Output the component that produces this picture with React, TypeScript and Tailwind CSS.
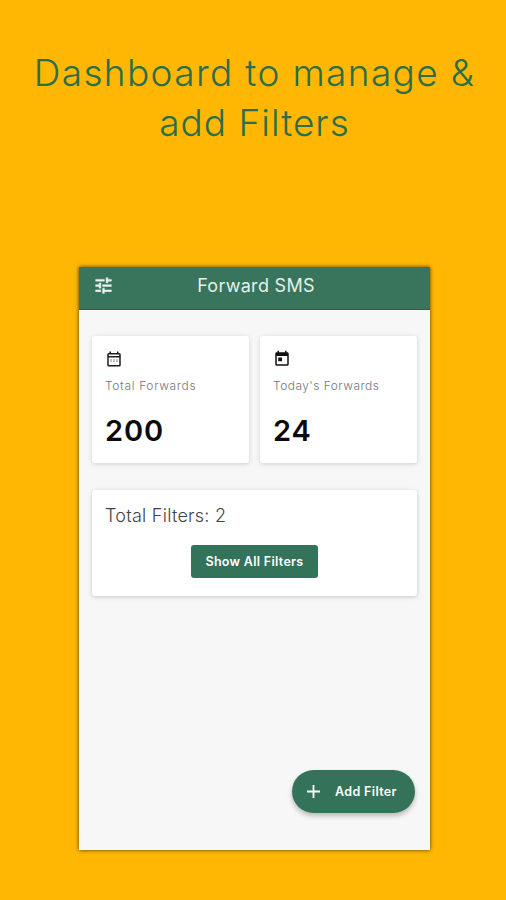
import type { ReactNode } from 'react'
import { MdToday } from 'react-icons/md'

function TuneIcon() {
  return (
    <svg width="21" height="21" viewBox="0 0 24 24" fill="currentColor" stroke="currentColor" strokeWidth="0.5" className="ml-[14px] text-[#eef5f1]">
      <path d="M3 17v2h6v-2H3zM3 5v2h10V5H3zm10 16v-2h8v-2h-8v-2h-2v6h2zM7 9v2H3v2h4v2h2V9H7zm14 4v-2H11v2h10zm-6-4h2V7h4V5h-4V3h-2v6z" />
    </svg>
  )
}

function CalendarIcon() {
  return (
    <svg width="18" height="18" viewBox="0 0 24 24" fill="#1c1c1c">
      <path d="M19 4h-1V2h-2v2H8V2H6v2H5a2 2 0 0 0-2 2v14a2 2 0 0 0 2 2h14a2 2 0 0 0 2-2V6a2 2 0 0 0-2-2Zm0 16H5V10h14v10Zm0-12H5V6h14v2Z" />
      <path d="M7 12h2v4H7zM11 12h2v4h-2zM15 12h2v4h-2z" opacity="0.35" />
    </svg>
  )
}

interface StatCardProps {
  icon: ReactNode
  label: string
  labelClass: string
  value: string
}

function StatCard({ icon, label, labelClass, value }: StatCardProps) {
  return (
    <div className="h-[127px] w-[157px] rounded-[3px] bg-white pl-[13px] pt-[14px] shadow-[0_1px_5px_rgba(0,0,0,0.16)]">
      <div className="h-[18px]">{icon}</div>
      <p className={`mt-[10px] whitespace-nowrap text-[12px] leading-[16px] font-light text-[#777] ${labelClass}`}>{label}</p>
      <p className="mt-[18px] text-[29px] leading-[38px] font-semibold tracking-[0.9px] text-[#0c0c0c]">{value}</p>
    </div>
  )
}

export default function App() {
  return (
    <div className="flex h-[900px] w-[506px] flex-col items-center overflow-hidden bg-[#ffb703] font-['Inter','Liberation_Sans',sans-serif]">
      <h1 className="mt-[48px] ml-[3px] whitespace-nowrap text-center text-[37px] leading-[50px] font-light text-[#2c6e49]">
        <span className="block tracking-[1.35px]">Dashboard to manage &amp;</span>
        <span className="block tracking-[1px]">add Filters</span>
      </h1>

      <div className="mt-[119px] ml-[3px] flex h-[583px] w-[351px] flex-col bg-[#f7f7f7] shadow-[0_0_4px_rgba(0,0,0,0.7)]">
        <header className="grid h-[43px] shrink-0 grid-cols-[50px_1fr_50px] items-center border-b border-[#16694c] bg-[#38755c] pb-[5px]">
          <TuneIcon />
          <h2 className="ml-[3px] whitespace-nowrap text-center text-[18px] leading-[24px] font-normal tracking-[0.3px] text-[#e6f0eb]">Forward SMS</h2>
        </header>

        <main className="flex flex-1 flex-col px-[13px] pt-[26px]">
          <div className="flex gap-[11px]">
            <StatCard icon={<CalendarIcon />} label="Total Forwards" labelClass="tracking-[0.65px]" value="200" />
            <StatCard icon={<MdToday size={18} color="#111" />} label="Today's Forwards" labelClass="tracking-[0.45px]" value="24" />
          </div>

          <section className="mt-[27px] flex h-[106px] flex-col rounded-[3px] bg-white px-[13px] pt-[14px] shadow-[0_1px_4px_rgba(0,0,0,0.2)]">
            <p className="text-[18px] leading-[24px] font-light tracking-[0.25px] text-[#444]">Total Filters: 2</p>
            <button className="mt-[17px] h-[33px] w-[127px] self-center whitespace-nowrap rounded-[3px] bg-[#32735a] pt-[2px] text-[12.5px] font-semibold tracking-[0.3px] text-white">
              Show All Filters
            </button>
          </section>

          <button className="mt-auto mr-[2px] mb-[37px] flex h-[43px] w-[123px] items-center self-end rounded-full bg-[#34735a] pl-[15px] text-[12.5px] font-semibold text-white shadow-[0_3px_5px_rgba(0,0,0,0.25)]">
            <svg width="13" height="13" viewBox="0 0 13 13" stroke="currentColor" strokeWidth="1.8">
              <path d="M6.5 0v13M0 6.5h13" />
            </svg>
            <span className="ml-[15px] pt-[2px] whitespace-nowrap tracking-[0.35px]">Add Filter</span>
          </button>
        </main>
      </div>
    </div>
  )
}
